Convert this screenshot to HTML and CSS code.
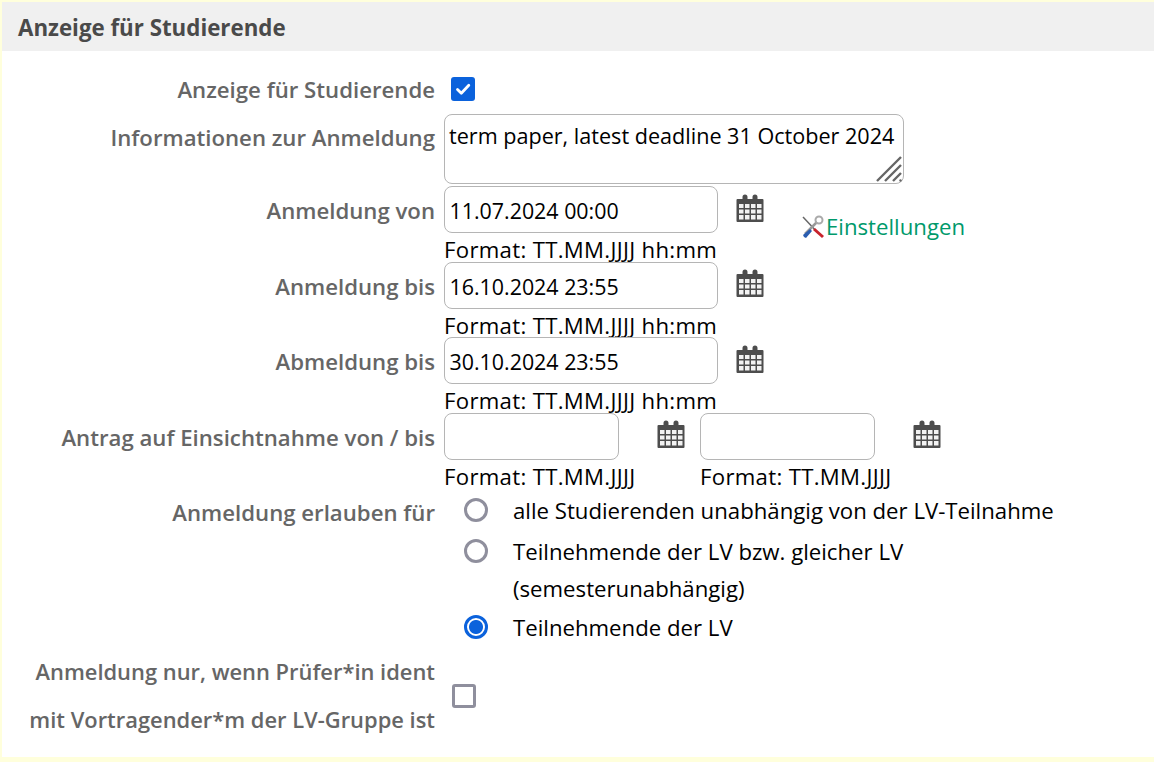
FILE: index.html
```html
<!DOCTYPE html>
<html lang="de">
<head>
<meta charset="utf-8">
<title>Anzeige für Studierende</title>
<link rel="stylesheet" href="styles.css">
</head>
<body>
<svg class="defs" width="0" height="0" aria-hidden="true">
  <symbol id="cal" viewBox="0 0 30 30">
    <path fill="#4d4d4d" d="M2.500 6h5V4a2.500 2.500 0 0 1 5 0v2h5V4a2.500 2.500 0 0 1 5 0v2h5a1 1 0 0 1 1 1v21a1 1 0 0 1-1 1h-25a1 1 0 0 1-1-1V7a1 1 0 0 1 1-1z"/>
    <path fill="#f2f2f2" d="M4 11h4.500v4H4zM10 11h4.500v4H10zM16 11h4.500v4H16zM22 11h4.500v4H22zM4 16.500h4.500v4H4zM10 16.500h4.500v4H10zM16 16.500h4.500v4H16zM22 16.500h4.500v4H22zM4 22h4.500v4.500H4zM10 22h4.500v4.500H10zM16 22h4.500v4.500H16zM22 22h4.500v4.500H22z"/>
  </symbol>
</svg>
<main class="panel">
  <h2 class="title">Anzeige für Studierende</h2>
  <form class="form">
    <div class="row row-check">
      <label class="label">Anzeige für Studierende</label>
      <div class="field"><span class="check checked"><svg viewBox="0 0 24 24" width="24" height="24"><path d="M6.500 12.500l3.800 3.800 7.500-8" fill="none" stroke="#fff" stroke-width="2.800" stroke-linecap="round" stroke-linejoin="round"/></svg></span></div>
    </div>
    <div class="row row-area">
      <label class="label">Informationen zur Anmeldung</label>
      <div class="field">
        <div class="textarea">term paper, latest deadline 31 October 2024
          <svg class="grip" viewBox="0 0 28 28" width="28" height="28"><path d="M26 2L2 26M26 10L10 26M26 18L18 26" stroke="#666" stroke-width="2.400" fill="none"/><circle cx="25.500" cy="25.500" r="1.200" fill="#666"/></svg>
        </div>
      </div>
    </div>
    <div class="row row-date">
      <label class="label">Anmeldung von</label>
      <div class="field">
        <div class="date-line"><div class="input wide">11.07.2024 00:00</div><svg class="cal"><use href="#cal"/></svg>
          <a class="settings"><svg class="tools" viewBox="0 0 24 24" width="24" height="24">
            <path d="M2 2l15 16" stroke="#666" stroke-width="1.500"/><path d="M14 13l9 8-2 2-9-8z" fill="#c8232c"/>
            <path d="M16 7L4 19" stroke="#999" stroke-width="2.500"/><path d="M9 14l-7 6 1 2 2 1 6-7z" fill="#2a5db0"/>
            <circle cx="18" cy="5" r="3.500" fill="none" stroke="#aaa" stroke-width="2"/>
          </svg>Einstellungen</a>
        </div>
        <div class="format">Format: TT.MM.JJJJ hh:mm</div>
      </div>
    </div>
    <div class="row row-date">
      <label class="label">Anmeldung bis</label>
      <div class="field">
        <div class="date-line"><div class="input wide">16.10.2024 23:55</div><svg class="cal"><use href="#cal"/></svg></div>
        <div class="format">Format: TT.MM.JJJJ hh:mm</div>
      </div>
    </div>
    <div class="row row-date">
      <label class="label">Abmeldung bis</label>
      <div class="field">
        <div class="date-line"><div class="input wide">30.10.2024 23:55</div><svg class="cal"><use href="#cal"/></svg></div>
        <div class="format">Format: TT.MM.JJJJ hh:mm</div>
      </div>
    </div>
    <div class="row row-date">
      <label class="label">Antrag auf Einsichtnahme von / bis</label>
      <div class="field pair">
        <div class="pair-item">
          <div class="date-line"><div class="input narrow"></div><svg class="cal"><use href="#cal"/></svg></div>
          <div class="format">Format: TT.MM.JJJJ</div>
        </div>
        <div class="pair-item">
          <div class="date-line"><div class="input narrow"></div><svg class="cal"><use href="#cal"/></svg></div>
          <div class="format">Format: TT.MM.JJJJ</div>
        </div>
      </div>
    </div>
    <div class="row row-radio">
      <label class="label">Anmeldung erlauben für</label>
      <div class="field radios">
        <div class="radio-item"><span class="radio"></span><span>alle Studierenden unabhängig von der LV-Teilnahme</span></div>
        <div class="radio-item"><span class="radio"></span><span>Teilnehmende der LV bzw. gleicher LV<br>(semesterunabhängig)</span></div>
        <div class="radio-item"><span class="radio on"></span><span>Teilnehmende der LV</span></div>
      </div>
    </div>
    <div class="row row-last">
      <label class="label">Anmeldung nur, wenn Prüfer*in ident<br>mit Vortragender*m der LV-Gruppe ist</label>
      <div class="field"><span class="check"></span></div>
    </div>
  </form>
</main>
</body>
</html>
```
FILE: styles.css
```css
* { box-sizing: border-box; }
html, body { margin: 0; padding: 0; height: 100%; overflow: hidden; }
body { background: #ffffdc; padding: 2px 0 5px 2px; font-family: "Open Sans", "Noto Sans", sans-serif; font-size: 22.2px; color: #000; }
.defs { position: absolute; }
.panel { background: #fff; height: 755px; }
.title { margin: 0; height: 49px; background: #f0f0f0; padding-left: 16px; font-size: 22.3px; line-height: 52px; font-weight: 700; color: #4a4a4a; }
.form { display: flex; flex-direction: column; padding-top: 20px; }
.row { display: grid; grid-template-columns: 433px 1fr; column-gap: 9px; }
.label { text-align: right; color: #666; font-weight: 600; line-height: 38px; white-space: nowrap; }
.row-check { height: 43px; }
.row-check .field { padding: 6px 0 0 7px; }
.check { display: block; width: 24px; height: 24px; border: 3px solid #8f8f9d; border-radius: 3px; background: #fff; }
.check.checked { background: #0b62dc; border: 0; }
.check svg { display: block; }
.row-area { height: 72px; }
.row-area .label { line-height: 48px; }
.textarea { position: relative; width: 460px; height: 70px; border: 1px solid #b5b5b5; border-radius: 8px; padding: 5px 4px; font-size: 21.6px; line-height: 31px; white-space: pre-wrap; }
.grip { position: absolute; right: 0; bottom: 0; }
.row-date { height: 75.67px; }
.row-date .label { line-height: 50.4px; }
.date-line { display: flex; align-items: flex-start; height: 47px; }
.input { height: 47px; border: 1px solid #b5b5b5; border-radius: 8px; padding: 0 4.500px; font-size: 21.4px; line-height: 48px; }
.wide { width: 274px; }
.narrow { width: 175px; }
.cal { width: 30px; height: 30px; margin: 6.500px 0 0 17px; filter: blur(0.6px); }
.pair .cal { margin-left: 37px; }
.settings { display: flex; align-items: center; gap: 1px; margin: 25.500px 0 0 36px; color: #00996b; height: 30px; }
.tools { flex: none; }
.format { line-height: 28px; margin-top: 3px; white-space: nowrap; letter-spacing: 0.3px; }
.pair { display: flex; }
.pair-item { width: 256px; }
.row-radio { height: 157px; }
.row-radio .label { line-height: 48px; }
.radios { display: flex; flex-direction: column; padding-top: 3px; }
.radio-item { display: flex; align-items: flex-start; padding-left: 20px; line-height: 37px; margin-bottom: 2px; }
.radio-item + .radio-item { margin-top: 2px; margin-bottom: 0; }
.radio-item span:last-child { display: block; }
.radio { flex: none; width: 24px; height: 24px; margin: 6px 25px 0 0; border: 3px solid #8f8f9d; border-radius: 50%; background: #fff; }
.radio.on { border-color: #0b62dc; background: radial-gradient(circle, #0b62dc 0 6.500px, #fff 7.500px); }
.row-last { padding-top: 2px; }
.row-last .label { line-height: 48px; font-size: 21.9px; }
.row-last .field { padding: 36px 0 0 8px; }
```
